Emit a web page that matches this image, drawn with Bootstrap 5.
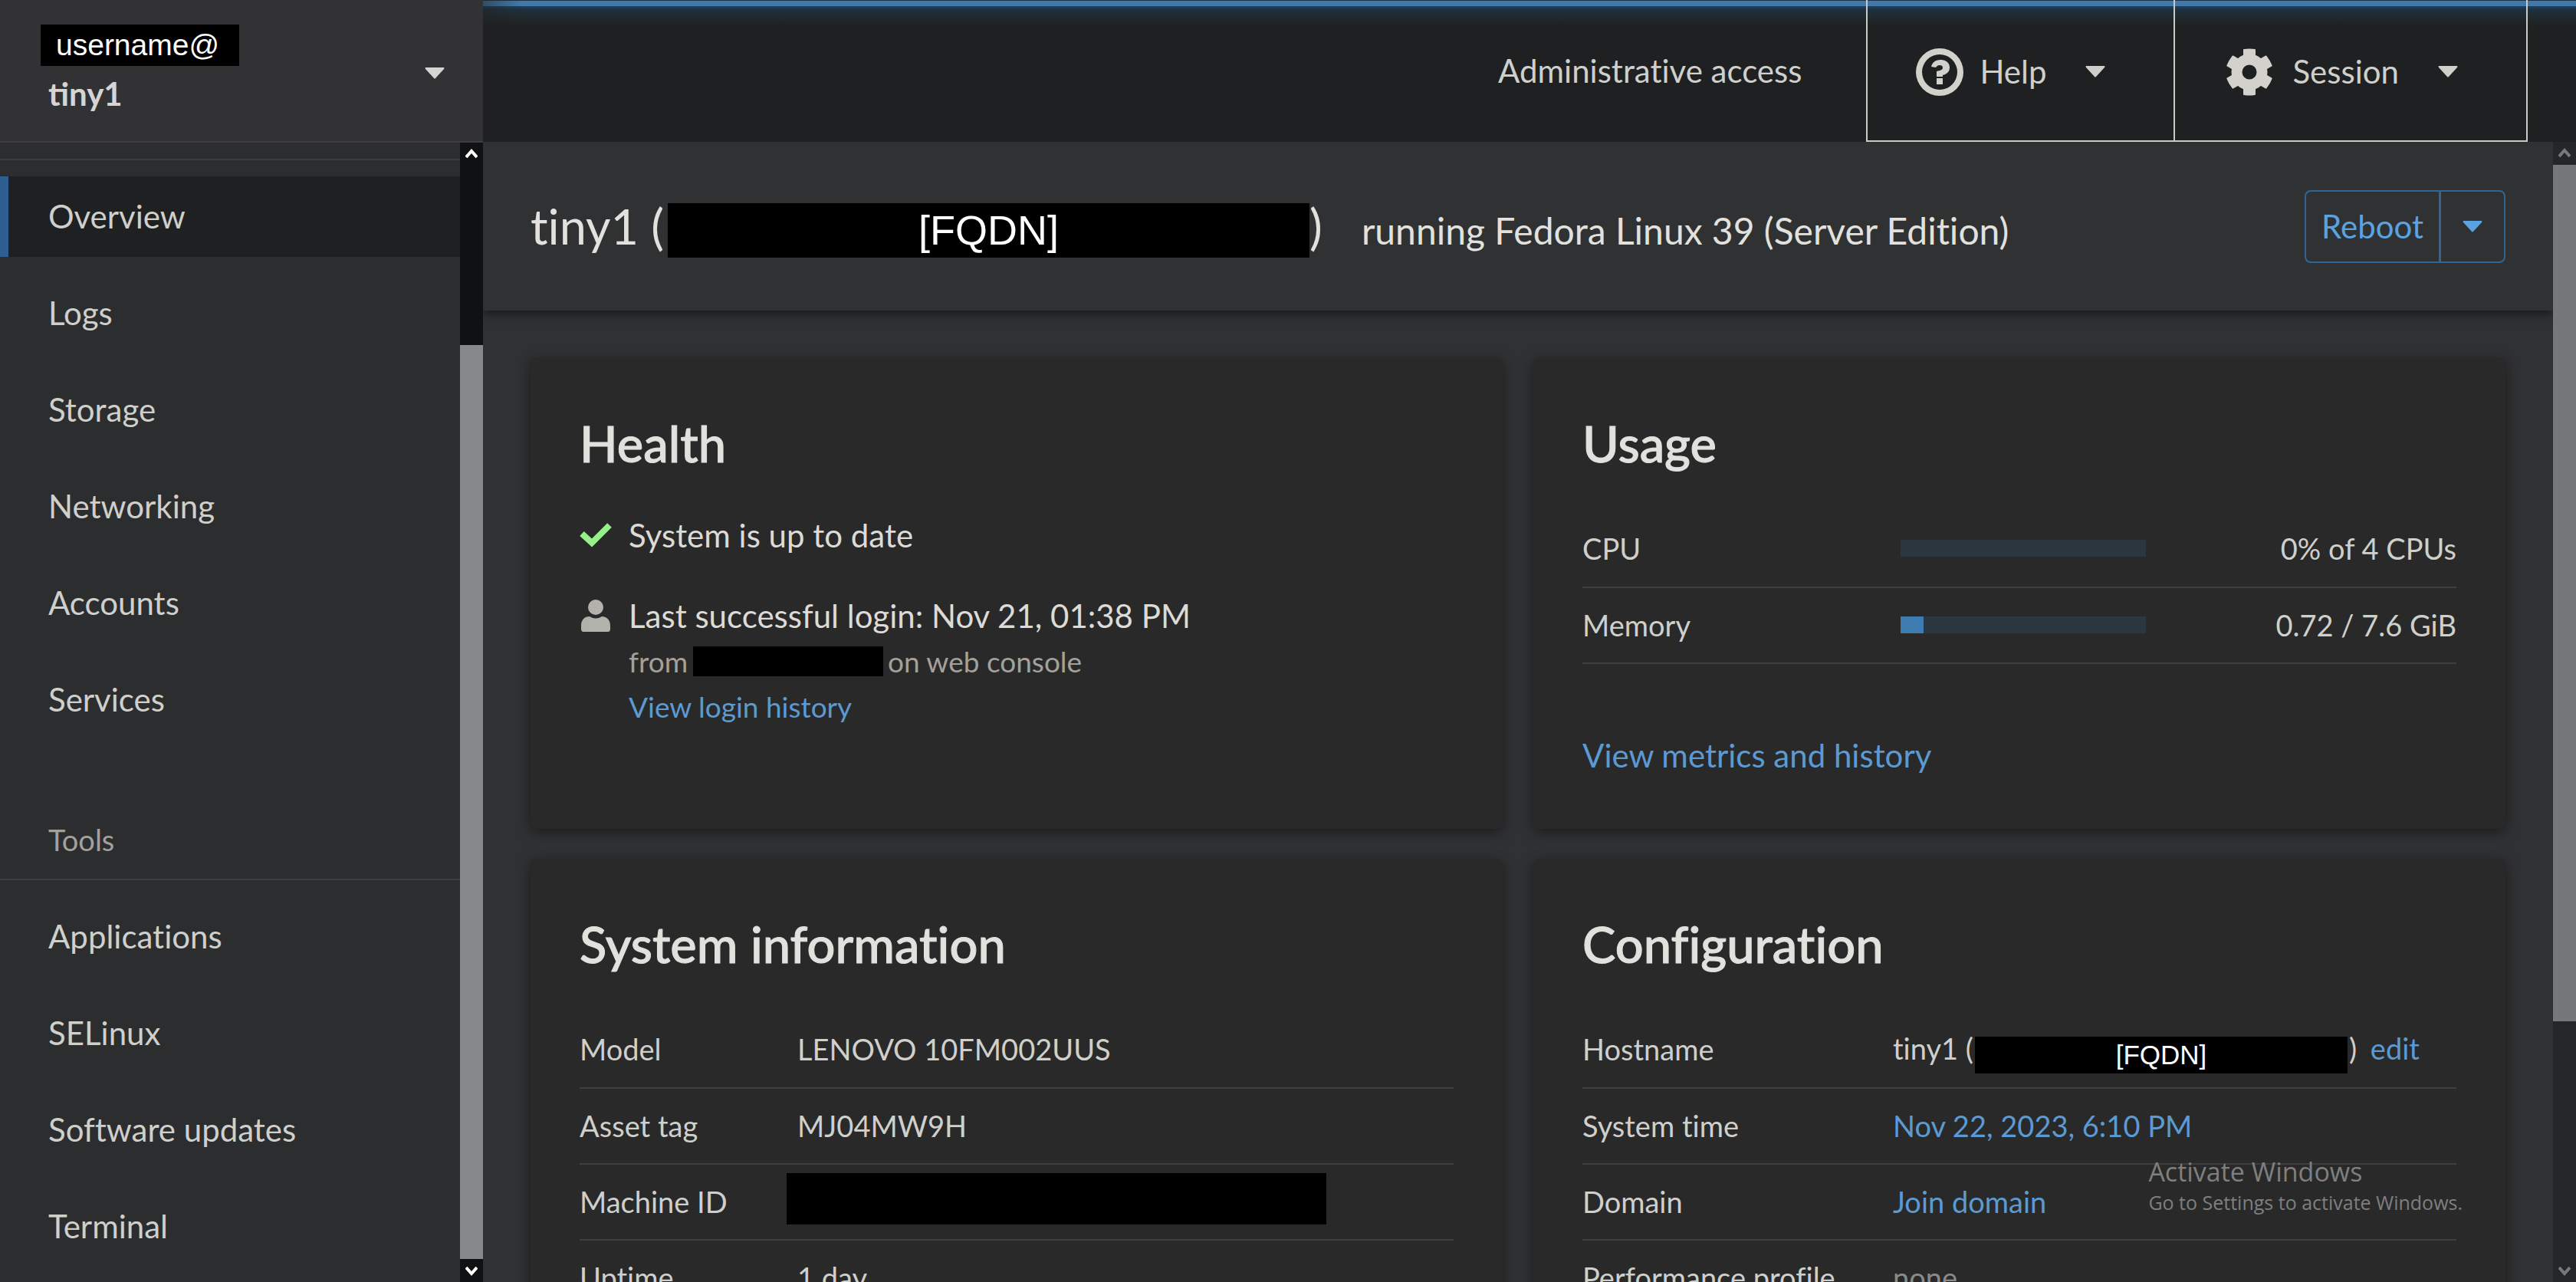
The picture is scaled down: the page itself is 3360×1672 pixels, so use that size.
<!DOCTYPE html>
<html lang="en" data-bs-theme="dark">
<head>
<meta charset="utf-8">
<meta name="viewport" content="width=device-width, initial-scale=1">
<title>Overview - tiny1</title>
<link href="https://cdn.jsdelivr.net/npm/bootstrap@5.3.0/dist/css/bootstrap.min.css" rel="stylesheet">
<style>
  :root { --ink: #cfcfcc; --bright: #e2e1de; --muted: #a3a19c; --accent: #5b9ad2; --line: #3d3e3f; }
  body { font-family: Lato, "Noto Sans", sans-serif; font-size: 42px; line-height: 63px; font-variant-ligatures: none; color: var(--ink); background: #303133; }
  a { color: var(--accent); text-decoration: none; }
  h1, h2 { margin: 0; line-height: 82px; color: var(--bright); }
  h1 { font-size: 63px; font-weight: 400; }
  h2 { font-size: 65px; font-weight: 500; margin-bottom: 48px; -webkit-text-stroke: 1px currentColor; }
  .caret { width: 26px; height: 15px; fill: currentColor; flex: none; }
  .redact { display: inline-block; background: #000; color: #fff; font-family: "Liberation Sans", Arial, sans-serif; text-align: center; }

  .side { width: 630px; background: #2c2d2e; }
  .host { height: 186px; padding: 6px 50px 0 53px; background: #323234; border: 0; border-bottom: 2px solid var(--line); color: #d6d5d3; text-align: left; }
  .host .redact { display: block; font-size: 39px; line-height: 54px; padding: 0 26px 0 20px; }
  .host strong { margin-left: 10px; line-height: 72px; display: block; }
  .menu { padding-top: 21px; border-top: 2px solid var(--line); margin-top: 21px; }
  .menu .nav-link { padding: 21px 63px; margin-bottom: 21px; color: var(--ink); }
  .menu .nav-link.active { background: #1f2021; box-shadow: inset 11px 0 #2f5f90; }
  .menu-head { padding: 78px 63px 19px; color: var(--muted); font-size: 38px; border-bottom: 2px solid var(--line); margin-bottom: 21px; }

  .track { width: 30px; background: #0f1112; color: #fff; flex: none; }
  .track svg { width: 16px; height: 16px; margin: 7px; fill: none; stroke: currentColor; stroke-width: 4; }
  .thumb { background: #86898b; }
  .track-main { background: #252628; color: #77797a; }
  .track-main .thumb { background: #76777a; }

  .top { height: 185px; background: linear-gradient(90deg, #1f202180, transparent 50px), linear-gradient(#1c3247 0 1px, #4279ac 1px 8px, #1c4464 8px, #1d3142 12px, #212b30 20px, #1f2021 34px); }
  .top-access { padding-right: 84px; }
  .top-btn { border: 2px solid #c9c9c6; border-width: 0 0 2px 2px; background: none; color: var(--ink); padding: 4px 89px 0 63px; }
  .top-btn svg:first-child { width: 62px; height: 62px; fill: #d2d1cb; margin-right: 21px; }
  .top-btn .caret { margin-left: 51px; }
  .top-btn.session { border-right-width: 2px; margin-right: 63px; padding-left: 66px; }
  .top-btn.session svg:first-child { margin-right: 25px; }

  .head { height: 220px; padding: 0 62px; background: #303133; box-shadow: 0 4px 12px #18191a; z-index: 1; }
  .head .redact { width: 837px; margin-left: 5px; font-size: 54px; line-height: 71px; }
  .head .os { font-size: 48px; margin-left: 51px; color: var(--bright); }
  .reboot .btn { border: 2px solid #2f6694; border-radius: 8px; color: #5ba3e0; font-size: 42px; line-height: 63px; padding: 14px 20px; }
  .reboot .btn.more { padding: 14px 28px; display: flex; align-items: center; }

  .page { padding: 62px 62px 0; }
  .tiles { --bs-gutter-x: 40px; --bs-gutter-y: 39px; }
  .tile { background: #292929; padding: 70px 64px 64px; border-radius: 8px; box-shadow: 0 4px 16px #1b1c1d; height: 100%; }
  .fact { display: flex; gap: 22px; margin-bottom: 42px; color: #dcdbd7; }
  .fact svg { width: 42px; height: 42px; margin-top: 10px; flex: none; }
  .minor { font-size: 37px; line-height: 60px; color: var(--muted); }
  .minor .redact { width: 248px; height: 39px; margin-left: -3px; margin-right: -3px; vertical-align: -5px; }
  .minor.from { line-height: 56px; height: 57px; }
  .facts { font-size: 38px; line-height: 60px; margin: 0; color: var(--ink); --bs-table-bg: transparent; --bs-table-color: var(--ink); border-color: var(--line); }
  .facts > tbody > tr > * { padding: 0 0 2px; height: 99px; vertical-align: middle; border-bottom: 2px solid var(--line); font-weight: 400; }
  .facts th { width: 284px; }
  .config th { width: 405px; }
  .usage th { width: 415px; }
  .facts .progress { width: 320px; height: 22px; border-radius: 0; background: #2c3740; }
  .facts .progress-bar { background: #3e7bb1; }
  .facts .machine { width: 704px; height: 67px; margin: 0 0 6px -14px; vertical-align: middle; }
  .facts .fqdn { width: 486px; font-size: 35px; line-height: 48px; vertical-align: -6px; margin: 0 2px; }
  .facts .unset { color: #8b8a87; }
  .metrics { display: inline-block; margin-top: 88px; }

  .watermark { right: 148px; bottom: 86px; font-family: "Open Sans", "Noto Sans", sans-serif; font-size: 25px; line-height: 36px; color: #7f7f7f; }
  .watermark div { font-size: 34px; line-height: 44px; }
</style>
<script src="https://cdn.jsdelivr.net/npm/bootstrap@5.3.0/dist/js/bootstrap.bundle.min.js"></script>
</head>
<body>
<div class="d-flex vh-100 overflow-hidden position-relative">

  <aside class="side d-flex flex-column flex-shrink-0">
    <button class="host d-flex align-items-center justify-content-between flex-shrink-0" type="button">
      <span><span class="redact">username@</span><strong>tiny1</strong></span>
      <svg class="caret" viewBox="0 0 26 15"><path d="M1 0h24q1 1 0 2L14 14q-1 1-2 0L1 2q-1-1 0-2z"/></svg>
    </button>
    <div class="d-flex flex-grow-1 overflow-hidden">
      <nav class="flex-grow-1">
        <div class="menu nav flex-column">
          <a class="nav-link active" href="#">Overview</a>
          <a class="nav-link" href="#">Logs</a>
          <a class="nav-link" href="#">Storage</a>
          <a class="nav-link" href="#">Networking</a>
          <a class="nav-link" href="#">Accounts</a>
          <a class="nav-link" href="#">Services</a>
          <div class="menu-head">Tools</div>
          <a class="nav-link" href="#">Applications</a>
          <a class="nav-link" href="#">SELinux</a>
          <a class="nav-link" href="#">Software updates</a>
          <a class="nav-link" href="#">Terminal</a>
        </div>
      </nav>
      <div class="track d-flex flex-column">
        <svg viewBox="0 0 16 16"><path d="M1 12l7-8 7 8"/></svg>
        <div style="flex:234"></div>
        <div class="thumb" style="flex:1192"></div>
        <svg viewBox="0 0 16 16"><path d="M1 4l7 8 7-8"/></svg>
      </div>
    </div>
  </aside>

  <div class="flex-grow-1 d-flex flex-column">
    <header class="top d-flex justify-content-end flex-shrink-0">
      <a class="top-access d-flex align-items-center text-reset" href="#">Administrative access</a>
      <button class="top-btn d-flex align-items-center" type="button">
        <svg viewBox="0 0 62 62"><path fill-rule="evenodd" d="M31 0a31 31 0 1 1 0 62a31 31 0 1 1 0-62zM31 8a23 23 0 1 0 0 46a23 23 0 1 0 0-46z"/><path d="M20 24c1-5 5-9 12-9c7 0 12 4 12 10c0 6-4 9-9 10v2h-8v-7c5-1 8-2 8-5c0-2-2-3-4-3c-2 0-4 1-5 3z"/><path d="M27 39h8v8h-8z"/></svg>
        Help
        <svg class="caret" viewBox="0 0 26 15"><path d="M1 0h24q1 1 0 2L14 14q-1 1-2 0L1 2q-1-1 0-2z"/></svg>
      </button>
      <button class="top-btn session d-flex align-items-center" type="button">
        <svg viewBox="-31 -31 62 62"><circle r="16.500" fill="none" stroke="#d2d1cb" stroke-width="14"/><path id="tooth" d="M-8-20V-29q0-1 1-1q7-1 14 0q1 0 1 1V-20zM-8 20V29q0 1 1 1q7 1 14 0q1 0 1-1V20z"/><use href="#tooth" transform="rotate(60)"/><use href="#tooth" transform="rotate(-60)"/></svg>
        Session
        <svg class="caret" viewBox="0 0 26 15"><path d="M1 0h24q1 1 0 2L14 14q-1 1-2 0L1 2q-1-1 0-2z"/></svg>
      </button>
    </header>

    <div class="d-flex flex-grow-1 overflow-hidden">
      <main class="flex-grow-1 overflow-hidden">
        <div class="head d-flex align-items-center justify-content-between position-relative">
          <div class="d-flex align-items-baseline">
            <h1>tiny1 (<span class="redact">[FQDN]</span>)</h1>
            <span class="os">running Fedora Linux 39 (Server Edition)</span>
          </div>
          <div class="reboot btn-group">
            <button class="btn" type="button">Reboot</button>
            <button class="btn more" type="button" aria-label="More power options"><svg class="caret" viewBox="0 0 26 15"><path d="M1 0h24q1 1 0 2L14 14q-1 1-2 0L1 2q-1-1 0-2z"/></svg></button>
          </div>
        </div>

        <div class="page">
          <div class="row tiles">
            <div class="col-6">
              <section class="tile">
                <h2>Health</h2>
                <div class="fact">
                  <svg viewBox="0 0 42 42" fill="none" stroke="#98f08c" stroke-width="8" stroke-linejoin="miter"><path d="M3 19L16 31L39 8"/></svg>
                  <div>System is up to date</div>
                </div>
                <div class="fact mb-0">
                  <svg viewBox="0 0 42 42" fill="#b3b1ab"><circle cx="21" cy="10" r="10"/><path d="M2 38v-4c0-7 4-12 11-12q8 5 16 0c7 0 11 5 11 12v4q0 4-3 4H5q-3 0-3-4z"/></svg>
                  <div>
                    <div>Last successful login: Nov 21, 01:38 PM</div>
                    <div class="minor from">from <span class="redact"></span> on web console</div>
                    <div class="minor"><a href="#">View login history</a></div>
                  </div>
                </div>
              </section>
            </div>
            <div class="col-6">
              <section class="tile">
                <h2>Usage</h2>
                <table class="table facts usage">
                  <tbody>
                    <tr><th scope="row">CPU</th><td><div class="progress"><div class="progress-bar" style="width:0%"></div></div></td><td class="text-end">0% of 4 CPUs</td></tr>
                    <tr><th scope="row">Memory</th><td><div class="progress"><div class="progress-bar" style="width:9.5%"></div></div></td><td class="text-end">0.72 / 7.6 GiB</td></tr>
                  </tbody>
                </table>
                <a class="metrics" href="#">View metrics and history</a>
              </section>
            </div>
            <div class="col-6">
              <section class="tile">
                <h2>System information</h2>
                <table class="table facts">
                  <tbody>
                    <tr><th scope="row">Model</th><td>LENOVO 10FM002UUS</td></tr>
                    <tr><th scope="row">Asset tag</th><td>MJ04MW9H</td></tr>
                    <tr><th scope="row">Machine ID</th><td><span class="redact machine"></span></td></tr>
                    <tr><th scope="row">Uptime</th><td>1 day</td></tr>
                  </tbody>
                </table>
              </section>
            </div>
            <div class="col-6">
              <section class="tile">
                <h2>Configuration</h2>
                <table class="table facts config">
                  <tbody>
                    <tr><th scope="row">Hostname</th><td>tiny1 (<span class="redact fqdn">[FQDN]</span>) <a class="ms-2" href="#">edit</a></td></tr>
                    <tr><th scope="row">System time</th><td><a href="#">Nov 22, 2023, 6:10 PM</a></td></tr>
                    <tr><th scope="row">Domain</th><td><a href="#">Join domain</a></td></tr>
                    <tr><th scope="row">Performance profile</th><td><span class="unset">none</span></td></tr>
                  </tbody>
                </table>
              </section>
            </div>
          </div>
        </div>
      </main>
      <div class="track track-main d-flex flex-column">
        <svg viewBox="0 0 16 16"><path d="M1 12l7-8 7 8"/></svg>
        <div class="thumb" style="flex:1118"></div>
        <div style="flex:310"></div>
        <svg viewBox="0 0 16 16"><path d="M1 4l7 8 7-8"/></svg>
      </div>
    </div>
  </div>

  <div class="watermark position-absolute"><div>Activate Windows</div>Go to Settings to activate Windows.</div>
</div>
</body>
</html>
